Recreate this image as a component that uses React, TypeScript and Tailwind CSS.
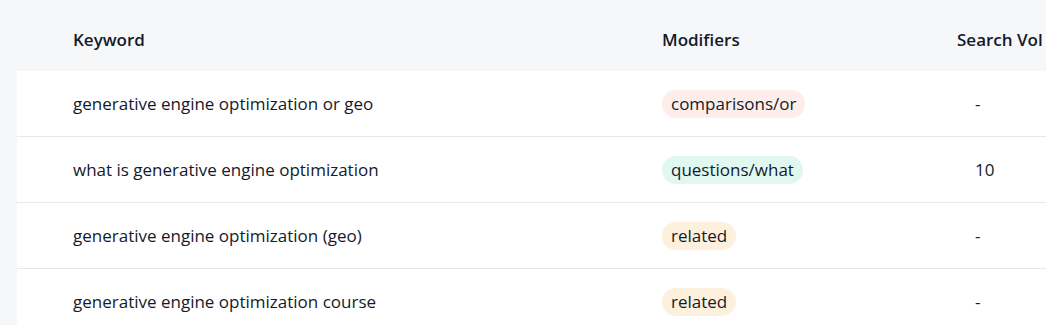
const rows = [
  { keyword: "generative engine optimization or geo", modifier: "comparisons/or", tone: "bg-[#fdeeea]", vol: "-" },
  { keyword: "what is generative engine optimization", modifier: "questions/what", tone: "bg-[#e0f8ef]", vol: "10" },
  { keyword: "generative engine optimization (geo)", modifier: "related", tone: "bg-[#fdf1de]", vol: "-" },
  { keyword: "generative engine optimization course", modifier: "related", tone: "bg-[#fdf1de]", vol: "-" },
];

export default function App() {
  return (
    <div className="w-[1046px] h-[325px] overflow-hidden bg-[#f6f7f9] pl-[17px] font-['Open_Sans',sans-serif] text-[#141a2b]">
      <div className="w-[1029px]">
        <div className="grid grid-cols-[645px_295px_1fr] h-[71px] pt-[9px] items-center text-[17px] font-semibold">
          <div className="pl-[56px]">Keyword</div>
          <div>Modifiers</div>
          <div className="whitespace-nowrap">Search Vol</div>
        </div>
        {rows.map((r, i) => (
          <div key={i} className="grid grid-cols-[645px_295px_1fr] h-[66px] items-center bg-white border-b border-[#e6e8eb] text-[17px]">
            <div className="pl-[56px]">{r.keyword}</div>
            <div>
              <span className={`inline-flex items-center h-[28px] px-[9px] rounded-full ${r.tone}`}>{r.modifier}</span>
            </div>
            <div className="pl-[18px]">{r.vol}</div>
          </div>
        ))}
      </div>
    </div>
  );
}
